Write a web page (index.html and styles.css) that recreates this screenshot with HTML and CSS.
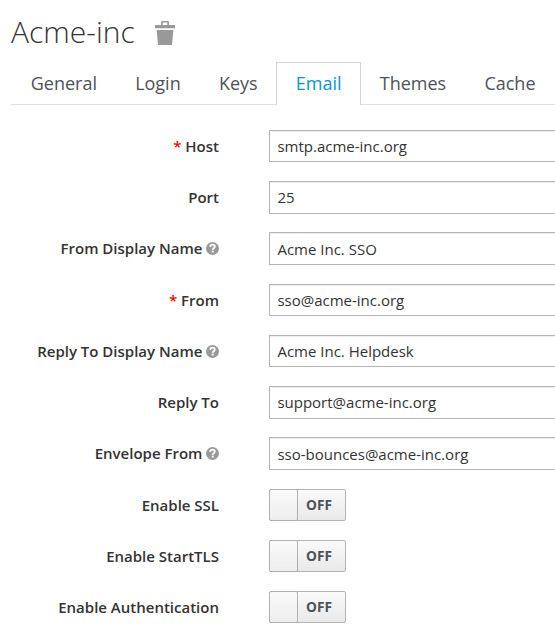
FILE: index.html
```
<!DOCTYPE html>
<html lang="en">
<head>
<meta charset="utf-8">
<title>Acme-inc</title>
<link rel="stylesheet" href="styles.css">
</head>
<body>
<svg class="defs" width="0" height="0">
  <symbol id="help" viewBox="0 0 13 13">
    <circle cx="6.5" cy="6.5" r="6.5" fill="#999"/>
    <path d="M4.2 4.9C4.3 3.3 5.2 2.7 6.5 2.7c1.4 0 2.3.8 2.3 1.9 0 1.6-2.1 1.6-2.1 3.1" fill="none" stroke="#fff" stroke-width="1.8"/>
    <path d="M5.7 8.6h2v1.9h-2z" fill="#fff"/>
  </symbol>
</svg>
<header class="head">
  <h1>Acme-inc</h1>
  <svg class="trash" viewBox="0 0 20 24"><path d="M0 4h6V1.200Q6 0 7.200 0h5.600Q14 0 14 1.200V4h6v3.300H0zM7.700 1.600V4h4.600V1.600zM1.600 9h16.800L17 24H3z" fill="#999" fill-rule="evenodd"/></svg>
</header>
<nav class="tabs">
  <a>General</a><a>Login</a><a>Keys</a><a class="active">Email</a><a>Themes</a><a>Cache</a>
</nav>
<form class="form">
  <div class="row"><label><span class="req">*</span> Host</label><div class="input">smtp.acme-inc.org</div></div>
  <div class="row"><label>Port</label><div class="input">25</div></div>
  <div class="row"><label>From Display Name <svg class="help"><use href="#help"/></svg></label><div class="input">Acme Inc. SSO</div></div>
  <div class="row"><label><span class="req">*</span> From</label><div class="input">sso@acme-inc.org</div></div>
  <div class="row"><label>Reply To Display Name <svg class="help"><use href="#help"/></svg></label><div class="input">Acme Inc. Helpdesk</div></div>
  <div class="row"><label>Reply To</label><div class="input">support@acme-inc.org</div></div>
  <div class="row"><label>Envelope From <svg class="help"><use href="#help"/></svg></label><div class="input">sso-bounces@acme-inc.org</div></div>
  <div class="row"><label>Enable SSL</label><div class="switch"><i></i><span>OFF</span></div></div>
  <div class="row"><label>Enable StartTLS</label><div class="switch"><i></i><span>OFF</span></div></div>
  <div class="row"><label>Enable Authentication</label><div class="switch"><i></i><span>OFF</span></div></div>
</form>
</body>
</html>
```
FILE: styles.css
```
* { box-sizing: border-box; }
body {
  margin: 0;
  height: 634px;
  overflow: hidden;
  background: #fff;
  color: #333;
  font-family: "Open Sans", sans-serif;
  font-size: 15px;
}
.defs { display: block; }
.head {
  display: flex;
  align-items: flex-start;
  height: 62px;
  padding: 12px 0 0 11px;
}
h1 {
  margin: 0;
  width: 144px;
  font-size: 30px;
  font-weight: 300;
  line-height: 40px;
}
.trash { width: 20px; height: 24px; margin-top: 9px; }
.tabs {
  display: flex;
  height: 43px;
  margin-left: 11px;
  padding-left: .6px;
  border-bottom: 1px solid #e2e2e2;
}
.tabs a {
  height: 43px;
  padding: 0 18.1px;
  border: 1px solid transparent;
  border-bottom: 0;
  color: #4d5258;
  font-size: 18px;
  line-height: 41px;
}
.tabs .active {
  margin-left: -.6px;
  padding-left: 18.7px;
  background: #fff;
  border-color: #d4d4d4;
  color: #0099d3;
}
.form { padding-top: 24.9px; }
.row {
  display: flex;
  height: 51.25px;
}
label {
  width: 219px;
  flex: none;
  margin-right: 50px;
  text-align: right;
  font-weight: 600;
  line-height: 32px;
  white-space: nowrap;
}
.req { color: #f00; }
.help { width: 13px; height: 13px; margin-left: -.3px; vertical-align: -1px; }
.input {
  flex: 1;
  height: 32.4px;
  padding: .3px 0 0 7.4px;
  border: 1px solid #b4b4b4;
  border-right: 0;
  border-radius: 1px 0 0 1px;
  box-shadow: inset 0 1px 1px rgba(0, 0, 0, .075);
  line-height: 31px;
}
.switch {
  display: flex;
  width: 77px;
  height: 32px;
  border: 1px solid #b4b4b4;
  border-radius: 2px;
  background: linear-gradient(#fafafa, #e9e9e9);
}
.switch i {
  width: 29px;
  margin: -1px 0 -1px -1px;
  border: 1px solid #b0b0b0;
  border-radius: 2px;
  background: linear-gradient(#fafafa, #ededed);
}
.switch span {
  flex: 1;
  padding-left: 8px;
  color: #4d5258;
  font-size: 13.7px;
  font-weight: 700;
  line-height: 30px;
}
```
